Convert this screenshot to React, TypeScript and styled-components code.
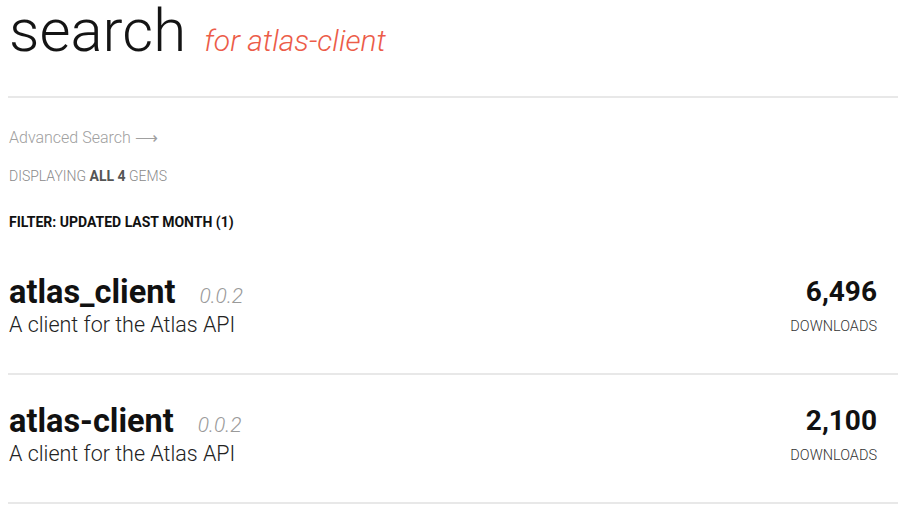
import React from "react";
import styled, { createGlobalStyle } from "styled-components";

const Global = createGlobalStyle`
  html, body { margin: 0; padding: 0; background: #fff; }
  body { font-family: Roboto, "Liberation Sans", sans-serif; color: #141414; }
`;

const Page = styled.div`
  padding: 0 8px;
  display: flex;
  flex-direction: column;
`;

const Header = styled.header`
  display: flex;
  align-items: baseline;
  padding-bottom: 34px;
  border-bottom: 2px solid #e8e8e8;
`;

const Title = styled.h1`
  margin: 0;
  font-size: 60px;
  line-height: 62px;
  font-weight: 300;
  color: #141414;
  padding-left: 1px;
`;

const Subtitle = styled.span`
  margin-left: 18px;
  font-size: 30px;
  line-height: 20px;
  font-style: italic;
  font-weight: 300;
  color: #ec5c49;
`;

const AdvancedLink = styled.a`
  margin-top: 30px;
  font-size: 16px;
  line-height: 20px;
  font-weight: 300;
  color: #a0a0a0;
  text-decoration: none;
  padding-left: 1px;
`;

const Meta = styled.p`
  margin: 20px 0 0;
  font-size: 14px;
  line-height: 16px;
  font-weight: 300;
  text-transform: uppercase;
  color: #8a8a8a;
  padding-left: 1px;

  b {
    font-weight: 700;
    color: #555;
  }
`;

const Filter = styled.p`
  margin: 30px 0 16px;
  font-size: 14px;
  line-height: 16px;
  font-weight: 700;
  text-transform: uppercase;
  color: #111;
  padding-left: 1px;
`;

const GemList = styled.div`
  display: flex;
  flex-direction: column;
`;

const GemRow = styled.div`
  display: flex;
  justify-content: space-between;
  align-items: flex-start;
  padding: 30px 21px 37px 1px;
  border-bottom: 2px solid #e8e8e8;
`;

const GemInfo = styled.div`
  display: flex;
  flex-direction: column;
`;

const NameLine = styled.div`
  display: flex;
  align-items: baseline;
`;

const GemName = styled.span`
  font-size: 32.5px;
  line-height: 32px;
  font-weight: 700;
  color: #111;
`;

const Version = styled.span`
  margin-left: 24px;
  font-size: 21px;
  line-height: 20px;
  font-style: italic;
  font-weight: 300;
  color: #9a9a9a;
`;

const Description = styled.span`
  margin-top: 6px;
  font-size: 21.5px;
  line-height: 22px;
  font-weight: 300;
  color: #222;
`;

const Downloads = styled.div`
  display: flex;
  flex-direction: column;
  align-items: flex-end;
`;

const Count = styled.span`
  font-size: 28px;
  line-height: 32px;
  font-weight: 700;
  color: #111;
`;

const CountLabel = styled.span`
  margin-top: 10px;
  font-size: 14.5px;
  line-height: 18px;
  font-weight: 300;
  text-transform: uppercase;
  color: #333;
`;

const gems = [
  { name: "atlas_client", version: "0.0.2", desc: "A client for the Atlas API", downloads: "6,496" },
  { name: "atlas-client", version: "0.0.2", desc: "A client for the Atlas API", downloads: "2,100" },
];

export default function App() {
  return (
    <>
      <Global />
      <Page>
        <Header>
          <Title>search</Title>
          <Subtitle>for atlas-client</Subtitle>
        </Header>
        <AdvancedLink href="#">Advanced Search ⟶</AdvancedLink>
        <Meta>
          Displaying <b>all 4</b> gems
        </Meta>
        <Filter>Filter: Updated last month (1)</Filter>
        <GemList>
          {gems.map((g) => (
            <GemRow key={g.name}>
              <GemInfo>
                <NameLine>
                  <GemName>{g.name}</GemName>
                  <Version>{g.version}</Version>
                </NameLine>
                <Description>{g.desc}</Description>
              </GemInfo>
              <Downloads>
                <Count>{g.downloads}</Count>
                <CountLabel>Downloads</CountLabel>
              </Downloads>
            </GemRow>
          ))}
        </GemList>
      </Page>
    </>
  );
}
